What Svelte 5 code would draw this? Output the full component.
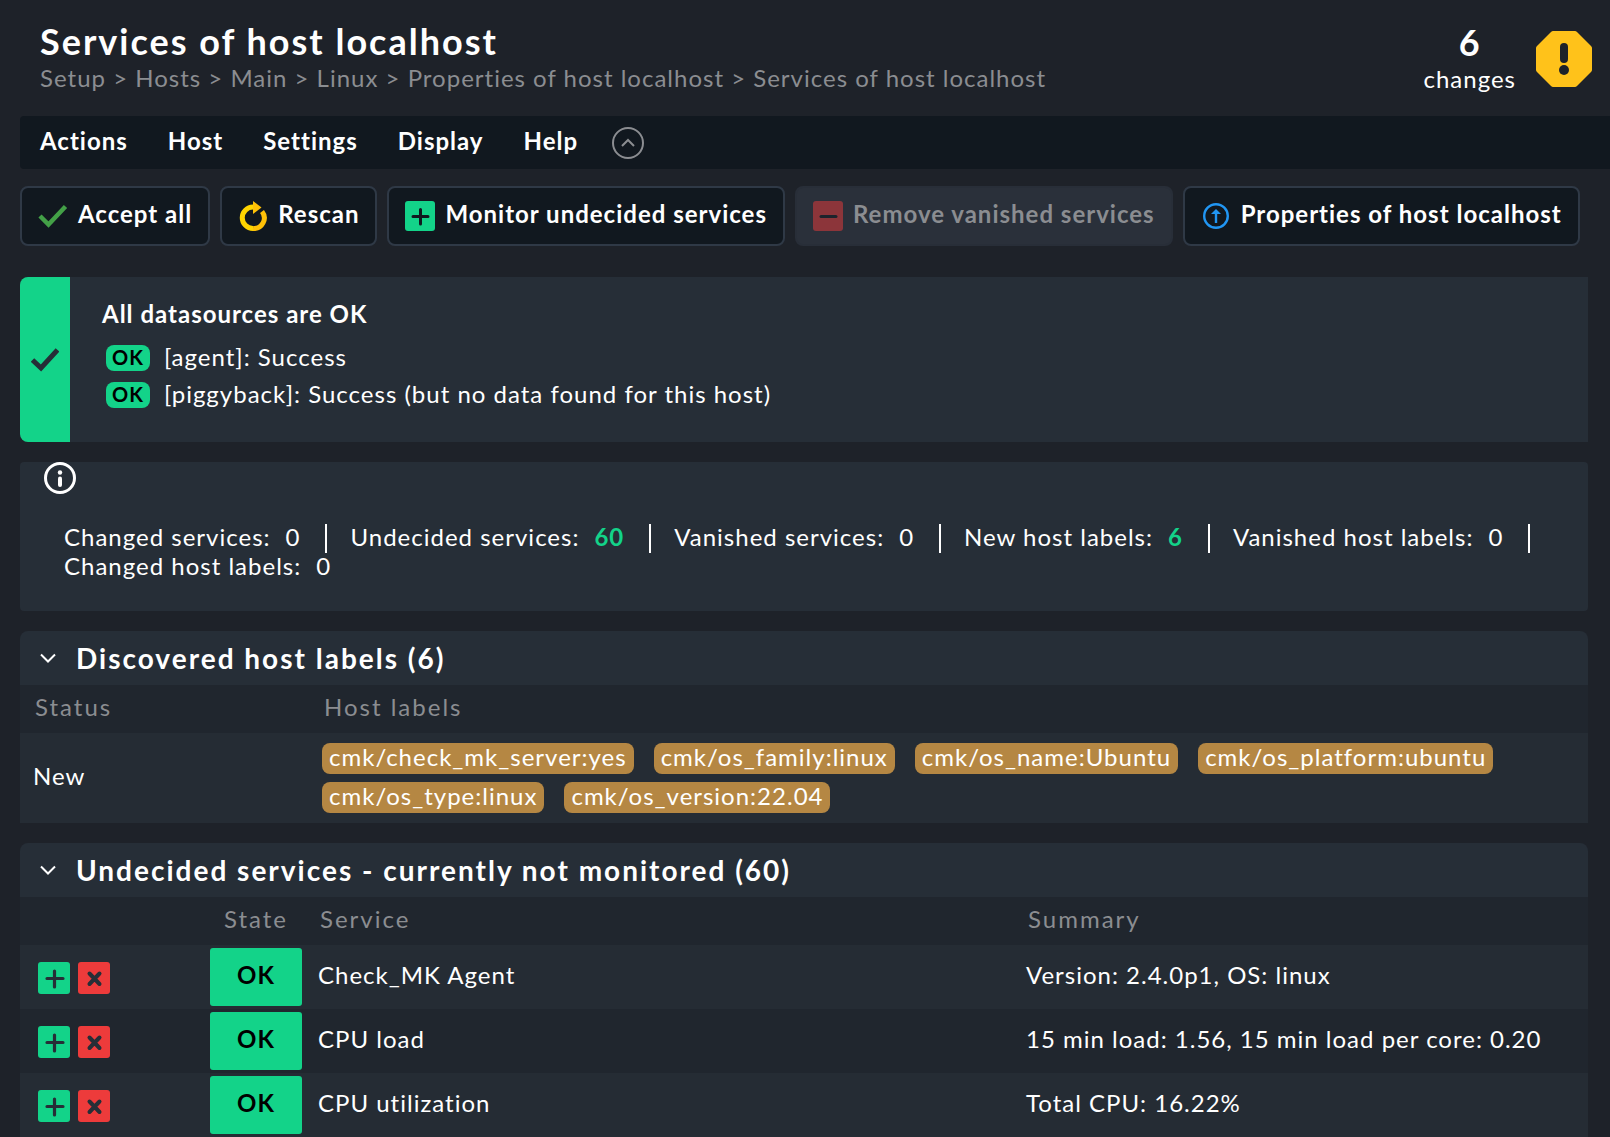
<script lang="ts">
	const crumbs = ['Setup', 'Hosts', 'Main', 'Linux', 'Properties of host localhost', 'Services of host localhost'];

	const menus = ['Actions', 'Host', 'Settings', 'Display', 'Help'];

	const shortcuts = [
		{ icon: 'accept', label: 'Accept all', disabled: false },
		{ icon: 'rescan', label: 'Rescan', disabled: false },
		{ icon: 'add', label: 'Monitor undecided services', disabled: false },
		{ icon: 'remove', label: 'Remove vanished services', disabled: true },
		{ icon: 'folder', label: 'Properties of host localhost', disabled: false }
	];

	const datasources = [
		{ state: 'OK', text: '[agent]: Success' },
		{ state: 'OK', text: '[piggyback]: Success (but no data found for this host)' }
	];

	const stats = [
		{ label: 'Changed services:', value: 0 },
		{ label: 'Undecided services:', value: 60 },
		{ label: 'Vanished services:', value: 0 },
		{ label: 'New host labels:', value: 6 },
		{ label: 'Vanished host labels:', value: 0 },
		{ label: 'Changed host labels:', value: 0 }
	];

	const hostLabels = [
		'cmk/check_mk_server:yes',
		'cmk/os_family:linux',
		'cmk/os_name:Ubuntu',
		'cmk/os_platform:ubuntu',
		'cmk/os_type:linux',
		'cmk/os_version:22.04'
	];

	const services = [
		{ state: 'OK', name: 'Check_MK Agent', summary: 'Version: 2.4.0p1, OS: linux' },
		{ state: 'OK', name: 'CPU load', summary: '15 min load: 1.56, 15 min load per core: 0.20' },
		{ state: 'OK', name: 'CPU utilization', summary: 'Total CPU: 16.22%' }
	];

	let labelsOpen = $state(true);
	let servicesOpen = $state(true);
</script>

{#snippet chevron(open: boolean)}
	<svg class="chevron" class:closed={!open} viewBox="0 0 18 18" aria-hidden="true">
		<path d="M2 5.5 9 12.5 16 5.5" />
	</svg>
{/snippet}

<header>
	<div class="title">
		<h1>Services of host localhost</h1>
		<nav class="breadcrumb" aria-label="Breadcrumb">
			{#each crumbs as crumb, i}
				{#if i > 0}<span>{' > '}</span>{/if}<a href="#{i}">{crumb}</a>
			{/each}
		</nav>
	</div>
	<a class="changes" href="#changes">
		<span class="count"><strong>6</strong><span>changes</span></span>
		<svg viewBox="0 0 56 56" aria-hidden="true">
			<path fill="#ffc21a" d="M17 0H39Q40 0 41 1L55 15Q56 16 56 17V39Q56 40 55 41L41 55Q40 56 39 56H17Q16 56 15 55L1 41Q0 40 0 39V17Q0 16 1 15L15 1Q16 0 17 0Z" />
			<rect x="24" y="12" width="8" height="20" rx="4" fill="#1e2229" />
			<circle cx="28" cy="39" r="5" fill="#1e2229" />
		</svg>
	</a>
</header>

<div class="menubar">
	{#each menus as menu}
		<button type="button">{menu}</button>
	{/each}
	<button type="button" class="toggle" aria-label="Hide toolbar">
		<svg viewBox="0 0 32 32" aria-hidden="true">
			<circle cx="16" cy="16" r="15" />
			<path d="M10 19 16 13 22 19" />
		</svg>
	</button>
</div>

<div class="shortcuts">
	{#each shortcuts as { icon, label, disabled }}
		<button type="button" {disabled}>
			<svg viewBox="0 0 30 30" aria-hidden="true">
				{#if icon === 'accept'}
					<path d="M2 15 10.500 23.500 27.500 5.500" fill="none" stroke="#43a047" stroke-width="4.500" />
				{:else if icon === 'rescan'}
					<path d="M15 6A10.500 10.500 0 0 0 15 27.500" fill="none" stroke="#ffd500" stroke-width="5" />
					<path d="M15 27.500A10.500 10.500 0 0 0 24 10.500" fill="none" stroke="#ffc107" stroke-width="5" />
					<path d="M15 0 23.500 6.500 15 13Z" fill="#ffc107" />
				{:else if icon === 'add'}
					<rect width="30" height="30" rx="3" fill="#13d389" />
					<path d="M15.500 8.500V23M8 15.500H23" stroke="#11181f" stroke-width="3" stroke-linecap="round" />
				{:else if icon === 'remove'}
					<rect width="30" height="30" rx="3" fill="#ed3b3b" />
					<path d="M8 15.500H23" stroke="#11181f" stroke-width="3" stroke-linecap="round" />
				{:else}
					<circle cx="15" cy="15" r="11.800" fill="none" stroke="#2196f3" stroke-width="2.400" />
					<path d="M15 22V11" fill="none" stroke="#2196f3" stroke-width="2.400" />
					<path d="M10 13 15 8 20 13Z" fill="#2196f3" />
				{/if}
			</svg>
			<span>{label}</span>
		</button>
	{/each}
</div>

<main>
	<section class="datasources">
		<div class="stripe">
			<svg viewBox="0 0 28 24" aria-hidden="true">
				<path d="M1.500 12 10 20 26.500 2" fill="none" stroke="#262e37" stroke-width="5" />
			</svg>
		</div>
		<div class="messages">
			<h2>All datasources are OK</h2>
			<ul>
				{#each datasources as { state, text }}
					<li><b>{state}</b><span>{text}</span></li>
				{/each}
			</ul>
		</div>
	</section>

	<section class="info">
		<svg viewBox="0 0 32 32" aria-hidden="true">
			<circle cx="16" cy="16" r="14.500" fill="none" stroke="#fff" stroke-width="3" />
			<circle cx="16" cy="10.500" r="2.200" fill="#fff" />
			<path d="M16 16.500V23" stroke="#fff" stroke-width="4" stroke-linecap="round" />
		</svg>
		<div class="stats">
			{#each stats as { label, value }}
				<span class="stat"><span>{label}<span class="value" class:changed={value > 0}>{value}</span></span></span>
			{/each}
		</div>
	</section>

	<section>
		<h2 class="heading">
			<button type="button" aria-expanded={labelsOpen} onclick={() => (labelsOpen = !labelsOpen)}>
				{@render chevron(labelsOpen)}<span>Discovered host labels (6)</span>
			</button>
		</h2>
		{#if labelsOpen}
			<table>
				<thead>
					<tr><th class="status">Status</th><th>Host labels</th></tr>
				</thead>
				<tbody>
					<tr>
						<td class="text">New</td>
						<td>
							<div class="tags">
								{#each hostLabels as label}
									<a href="#{label}">{label}</a>
								{/each}
							</div>
						</td>
					</tr>
				</tbody>
			</table>
		{/if}
	</section>

	<section>
		<h2 class="heading">
			<button type="button" aria-expanded={servicesOpen} onclick={() => (servicesOpen = !servicesOpen)}>
				{@render chevron(servicesOpen)}<span>Undecided services - currently not monitored (60)</span>
			</button>
		</h2>
		{#if servicesOpen}
			<table>
				<thead>
					<tr>
						<th class="actions"></th>
						<th class="state">State</th>
						<th class="service">Service</th>
						<th>Summary</th>
					</tr>
				</thead>
				<tbody>
					{#each services as { state, name, summary }}
						<tr>
							<td>
								<div class="icons">
									<button type="button" aria-label="Monitor {name}">
										<svg viewBox="0 0 32 32" aria-hidden="true">
											<rect width="32" height="32" rx="3" fill="#13d389" />
											<path d="M16.500 9V25M9 16.500H25" stroke="#262e37" stroke-width="3.200" stroke-linecap="round" />
										</svg>
									</button>
									<button type="button" aria-label="Disable {name}">
										<svg viewBox="0 0 32 32" aria-hidden="true">
											<rect width="32" height="32" rx="3" fill="#ed3b3b" />
											<path d="M11.500 11.500 21.500 22M21.500 11.500 11.500 22" stroke="#262e37" stroke-width="4" stroke-linecap="round" />
										</svg>
									</button>
								</div>
							</td>
							<td class="state"><b>{state}</b></td>
							<td class="text">{name}</td>
							<td class="text">{summary}</td>
						</tr>
					{/each}
				</tbody>
			</table>
		{/if}
	</section>
</main>

<style>
	:global(body) {
		margin: 0;
		background: #1e2229;
		color: #fff;
		font: 24px/30px Lato, sans-serif;
		letter-spacing: 1px;
	}

	h1,
	h2,
	ul {
		margin: 0;
		padding: 0;
		list-style: none;
	}

	a {
		color: inherit;
		text-decoration: none;
	}

	button {
		margin: 0;
		padding: 0;
		border: 0;
		background: none;
		color: inherit;
		font: inherit;
		letter-spacing: inherit;
		cursor: pointer;
	}

	svg {
		display: block;
		flex: none;
	}

	header {
		display: flex;
		justify-content: space-between;
		height: 116px;
		padding: 0 18px 0 40px;
		box-sizing: border-box;
	}

	.title {
		padding-top: 19px;
	}

	h1 {
		font-size: 36px;
		line-height: 44px;
		letter-spacing: 2px;
	}

	.breadcrumb {
		color: #8b8d91;
		white-space: nowrap;
	}

	.changes {
		display: flex;
		align-items: flex-start;
		gap: 20px;
		padding-top: 20px;
	}

	.changes svg {
		width: 56px;
		margin-top: 11px;
	}

	.count {
		display: flex;
		flex-direction: column;
		align-items: center;
	}

	.count strong {
		font-size: 36px;
		line-height: 44px;
	}

	.menubar {
		display: flex;
		align-items: center;
		gap: 40px;
		height: 53px;
		margin-left: 20px;
		padding-left: 20px;
		background: #11181f;
		border-radius: 4px 0 0 4px;
		font-weight: 700;
	}

	.menubar button {
		padding-bottom: 4px;
	}

	.menubar .toggle {
		padding: 0;
		margin-left: -6px;
	}

	.toggle svg {
		width: 32px;
		fill: none;
		stroke: #8b8d91;
		stroke-width: 2;
	}

	.shortcuts {
		display: flex;
		flex-wrap: wrap;
		gap: 10px;
		padding: 17px 20px 31px;
	}

	.shortcuts button {
		display: flex;
		align-items: center;
		gap: 10px;
		height: 60px;
		padding: 0 16px;
		border: 2px solid #2f3946;
		border-radius: 8px;
		background: #11181f;
		font-weight: 700;
		white-space: nowrap;
	}

	.shortcuts button:disabled {
		border-color: #282e38;
		background: #2a303a;
		color: #8b8d91;
		cursor: default;
	}

	.shortcuts button:disabled svg {
		opacity: 0.5;
	}

	.shortcuts svg {
		width: 30px;
	}

	.shortcuts span {
		padding-bottom: 4px;
	}

	main {
		display: flex;
		flex-direction: column;
		gap: 20px;
		padding: 0 22px 0 20px;
	}

	.datasources {
		display: flex;
		background: #262e37;
		border-radius: 8px 0 0 8px;
	}

	.stripe {
		display: flex;
		align-items: center;
		justify-content: center;
		width: 50px;
		border-radius: 8px 0 0 8px;
		background: #13d389;
	}

	.stripe svg {
		width: 28px;
	}

	.messages {
		padding: 22px 32px 29px;
	}

	.messages h2 {
		margin-bottom: 10px;
		font-size: 24px;
		line-height: 30px;
	}

	.messages li {
		display: flex;
		align-items: center;
		gap: 14px;
		height: 37px;
		padding-left: 4px;
	}

	.messages span {
		padding-bottom: 2px;
	}

	.messages b {
		width: 44px;
		padding-bottom: 2px;
		border-radius: 8px;
		background: #13d389;
		color: #000;
		font-size: 20px;
		line-height: 24px;
		text-align: center;
	}

	.info {
		min-height: 149px;
		background: #262e37;
		border-radius: 4px;
	}

	.info svg {
		width: 32px;
		margin-left: 24px;
	}

	.stats {
		display: flex;
		flex-wrap: wrap;
		padding: 30px 20px 29px 44px;
	}

	.stat {
		margin-right: 23px;
		padding: 0 25px 4px 0;
		border-right: 2px solid #fff;
		line-height: 25px;
	}

	.stat:last-child {
		border: 0;
	}

	.value {
		margin-left: 15px;
	}

	.changed {
		color: #13d389;
		font-weight: 700;
	}

	.heading {
		height: 54px;
		background: #262e37;
		border-radius: 8px 8px 0 0;
		font-size: 28px;
		line-height: 34px;
		letter-spacing: 2px;
	}

	.heading button {
		display: flex;
		align-items: center;
		gap: 19px;
		height: 54px;
		padding-left: 19px;
	}

	.chevron {
		width: 18px;
		fill: none;
		stroke: #fff;
		stroke-width: 2;
	}

	.chevron.closed {
		rotate: -90deg;
	}

	table {
		width: 100%;
		table-layout: fixed;
		border-collapse: collapse;
		background: #20262e;
	}

	th {
		height: 48px;
		padding: 0 15px 4px;
		box-sizing: border-box;
		color: #8b8d91;
		font-weight: 400;
		letter-spacing: 2px;
		text-align: left;
	}

	td {
		padding: 0 13px;
	}

	.text {
		padding-bottom: 4px;
	}

	tbody tr:nth-child(odd) {
		background: #252c34;
	}

	.status {
		width: 289px;
	}

	.tags {
		display: flex;
		flex-wrap: wrap;
		gap: 8px 20px;
		padding: 10px 0;
	}

	.tags a {
		padding: 0 7px 4px;
		border-radius: 8px;
		background: #b58743;
		line-height: 27px;
	}

	.actions {
		width: 187px;
	}

	.service {
		width: 708px;
	}

	.state {
		width: 98px;
		box-sizing: border-box;
		text-align: center;
	}

	td.state {
		padding: 3px;
	}

	.state b {
		display: block;
		padding-bottom: 4px;
		border-radius: 3px;
		background: #13d389;
		color: #000;
		line-height: 54px;
	}

	.icons {
		display: flex;
		gap: 8px;
		padding: 2px 0 0 5px;
	}

	.icons svg {
		width: 32px;
	}
</style>
